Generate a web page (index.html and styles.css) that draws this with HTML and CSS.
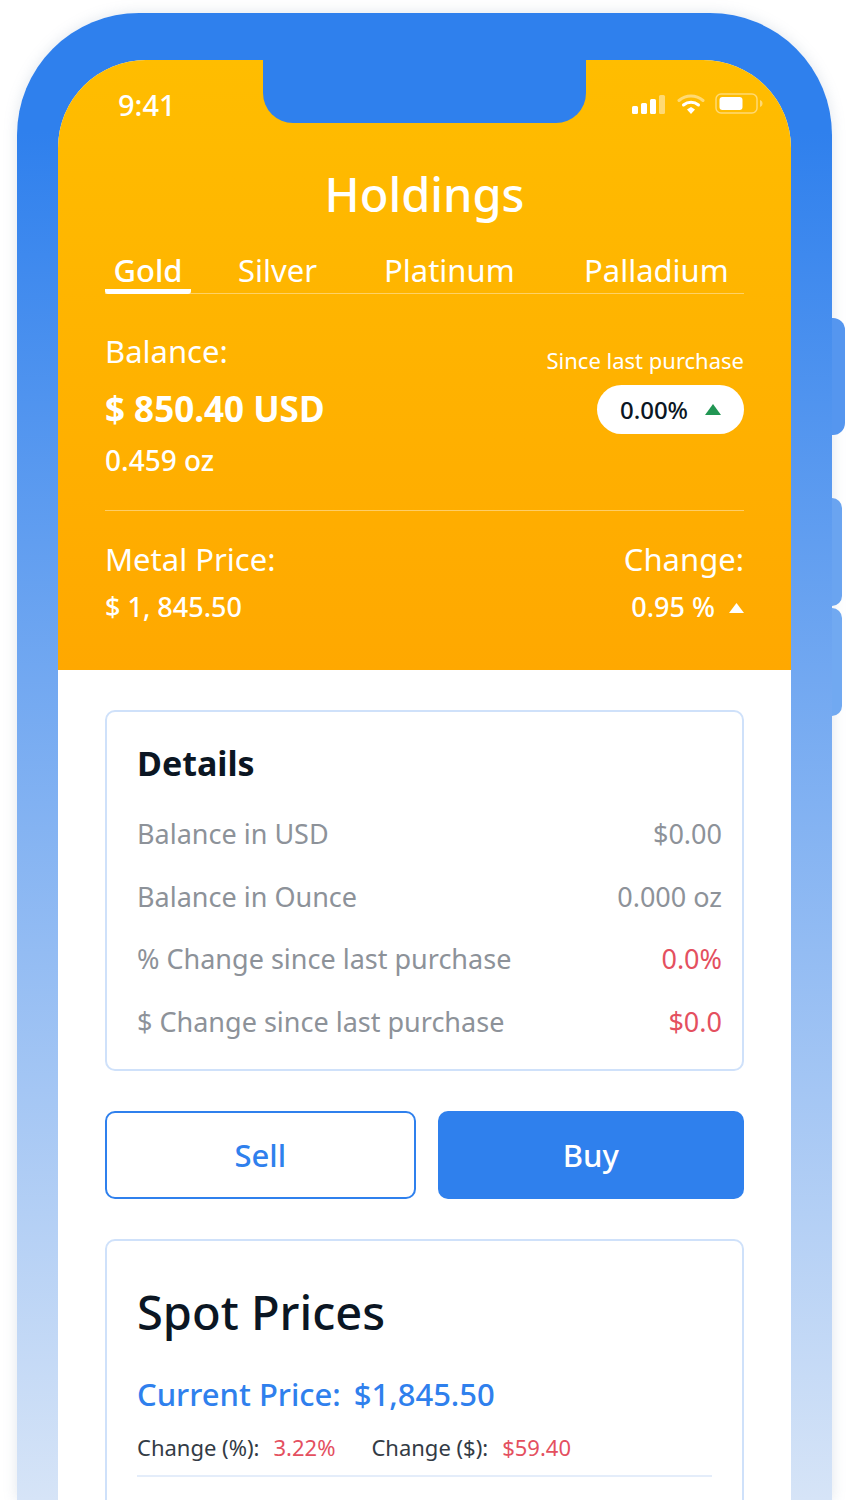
FILE: index.html
```html
<!DOCTYPE html>
<html lang="en">
<head>
<meta charset="utf-8">
<title>Holdings</title>
<link rel="stylesheet" href="styles.css">
</head>
<body>
<div class="device">
  <span class="side-btn side-a"></span>
  <span class="side-btn side-b"></span>
  <span class="side-btn side-c"></span>
  <div class="screen">
    <header class="hero">
      <div class="notch"></div>
      <div class="status">
        <span class="time">9:41</span>
        <span class="status-icons">
          <svg width="35" height="22" viewBox="0 0 35 22"><rect x="0" y="13" width="6" height="8" rx="1.5" fill="#fff"/><rect x="9" y="10" width="6" height="11" rx="1.5" fill="#fff"/><rect x="18" y="6" width="6" height="15" rx="1.5" fill="#fff"/><rect x="27" y="2" width="6" height="19" rx="1.5" fill="#fff" fill-opacity=".45"/></svg>
          <svg width="28" height="22" viewBox="0 0 28 22" fill="none"><path d="M2 7.5C9 1.5 19 1.5 26 7.5" stroke="#fff" stroke-opacity=".45" stroke-width="3" stroke-linecap="round"/><path d="M6.5 12C11 8.2 17 8.2 21.5 12" stroke="#fff" stroke-width="3" stroke-linecap="round"/><path d="M10 16.5 14 14 18 16.5 14 21Z" fill="#fff"/></svg>
          <svg width="48" height="22" viewBox="0 0 48 22" fill="none"><rect x="1" y="1" width="41" height="19" rx="5" stroke="#fff" stroke-opacity=".45" stroke-width="1.5"/><rect x="4.500" y="4" width="23" height="13" rx="3" fill="#fff"/><path d="M45 7C47 8 47.500 9 47.500 10.500 47.500 12 47 13 45 14Z" fill="#fff" fill-opacity=".45"/></svg>
        </span>
      </div>
      <h1 class="title">Holdings</h1>
      <nav class="tabs">
        <a class="tab tab-active">Gold</a>
        <a class="tab">Silver</a>
        <a class="tab">Platinum</a>
        <a class="tab">Palladium</a>
      </nav>
      <section class="balance">
        <div class="balance-left">
          <div class="label">Balance:</div>
          <div class="amount">$ 850.40 USD</div>
          <div class="oz">0.459 oz</div>
        </div>
        <div class="balance-right">
          <div class="since">Since last purchase</div>
          <div class="pill">0.00%<svg class="tri" width="16" height="11" viewBox="0 0 16 11"><path d="M8 0 16 11H0Z" fill="#219653"/></svg></div>
        </div>
      </section>
      <section class="metal">
        <div>
          <div class="label">Metal Price:</div>
          <div class="metal-value">$ 1, 845.50</div>
        </div>
        <div class="metal-right">
          <div class="label">Change:</div>
          <div class="metal-value">0.95 %<svg class="tri" width="15" height="10" viewBox="0 0 15 10"><path d="M7.500 0 15 10H0Z" fill="#fff"/></svg></div>
        </div>
      </section>
    </header>
    <main class="content">
      <section class="card details">
        <h2 class="details-title">Details</h2>
        <div class="row"><span>Balance in USD</span><span>$0.00</span></div>
        <div class="row"><span>Balance in Ounce</span><span>0.000 oz</span></div>
        <div class="row"><span>% Change since last purchase</span><span class="red">0.0%</span></div>
        <div class="row"><span>$ Change since last purchase</span><span class="red">$0.0</span></div>
      </section>
      <div class="actions">
        <button class="btn btn-sell">Sell</button>
        <button class="btn btn-buy">Buy</button>
      </div>
      <section class="card spot">
        <h2 class="spot-title">Spot Prices</h2>
        <div class="current"><span>Current Price:</span><span>$1,845.50</span></div>
        <div class="changes">
          <span>Change (%):</span><span class="red">3.22%</span>
          <span class="second">Change ($):</span><span class="red">$59.40</span>
        </div>
        <div class="rule"></div>
      </section>
    </main>
  </div>
</div>
</body>
</html>
```
FILE: styles.css
```css
* { box-sizing: border-box; }
html, body { margin: 0; height: 1500px; overflow: hidden; background: #fff; }
body { font-family: "Noto Sans", "Open Sans", sans-serif; color: #0b1623; }

.device {
  position: relative;
  width: 815px;
  height: 1487px;
  margin: 13px 0 0 17px;
  padding: 47px 41px 0;
  border-radius: 122px 122px 0 0;
  background: linear-gradient(180deg, #2f80ed 0%, #2f80ed 8%, #d6e4f7 100%);
  box-shadow: 0 0 14px rgba(120, 140, 170, .22);
}
.side-btn { position: absolute; background: #5b9cf0; border-radius: 0 12px 12px 0; }
.side-a { left: 815px; top: 305px; width: 13px; height: 117px; background: #5596ef; }
.side-b { left: 815px; top: 485px; width: 10px; height: 108px; background: #6aa4f0; }
.side-c { left: 815px; top: 595px; width: 10px; height: 108px; background: #71a9f1; }

.screen { width: 733px; height: 1440px; background: #fff; border-radius: 88px 88px 0 0; overflow: hidden; }

.hero {
  position: relative;
  height: 610px;
  padding: 0 47px;
  color: #fff;
  background: linear-gradient(180deg, #ffbd00 0%, #ffa800 100%);
}
.notch { position: absolute; left: 205px; top: 0; width: 323px; height: 63px; background: #2f80ed; border-radius: 0 0 30px 30px; }

.status { display: flex; justify-content: space-between; align-items: center; height: 32px; position: relative; top: 28px; padding-left: 13px; margin-right: -19px; }
.time { font-size: 29px; font-weight: 500; }
.status-icons { display: flex; align-items: center; gap: 10px; }

.title { margin: 0; padding-top: 72px; text-align: center; font-size: 47px; line-height: 60px; font-weight: 500; }

.tabs { display: grid; grid-template-columns: 133px 146px 200px 1fr; margin-top: 26px; height: 44px; border-bottom: 1.500px solid rgba(255,255,255,.4); }
.tab { display: block; height: 44px; font-size: 31px; line-height: 41px; }
.tab-active { width: 86px; text-align: center; font-weight: 500; border-bottom: 5px solid #fff; border-radius: 3px; }

.balance { display: flex; justify-content: space-between; height: 217px; padding-top: 36px; border-bottom: 1.500px solid rgba(255,255,255,.4); }
.label { font-size: 31px; line-height: 42px; }
.amount { font-size: 35px; line-height: 46px; font-weight: 700; margin-top: 14px; }
.oz { font-size: 28px; line-height: 37px; margin-top: 10px; font-weight: 500; }
.balance-right { display: flex; flex-direction: column; align-items: flex-end; padding-top: 15px; }
.since { font-size: 22px; line-height: 30px; }
.pill { display: flex; align-items: center; justify-content: center; gap: 17px; width: 147px; height: 49px; margin-top: 10px; background: #fff; color: #0b1623; border-radius: 25px; font-size: 24px; font-weight: 500; }

.metal { display: flex; justify-content: space-between; padding-top: 27px; }
.metal-right { text-align: right; }
.metal-value { font-size: 27px; line-height: 37px; margin-top: 8px; font-weight: 500; }
.metal-value .tri { margin-left: 14px; position: relative; top: -4px; }

.content { padding: 40px 47px 0; }
.card { border: 2px solid #cfe1fa; border-radius: 10px; background: #fff; }
.details { height: 361px; padding: 28px 20px 0 30px; }
.details-title { margin: 0 0 26px; font-size: 34px; line-height: 46px; font-weight: 700; }
.row { display: flex; justify-content: space-between; height: 62.500px; font-size: 27px; line-height: 44px; color: #8d9299; }
.red { color: #e4505f; }

.actions { display: flex; gap: 22px; margin-top: 40px; }
.btn { flex: 1; height: 88px; padding: 0; font-family: inherit; font-size: 31px; font-weight: 500; border-radius: 10px; }
.btn-sell { background: #fff; color: #2f80ed; border: 2px solid #2f80ed; }
.btn-buy { background: #2f80ed; color: #fff; border: 0; }

.spot { margin-top: 40px; height: 400px; padding: 41px 30px 0; }
.spot-title { margin: 0; font-size: 47px; line-height: 60px; font-weight: 500; }
.current { display: flex; gap: 13px; margin-top: 31px; font-size: 31px; line-height: 42px; font-weight: 500; color: #2f80ed; }
.changes { display: flex; margin-top: 17px; font-size: 22px; line-height: 30px; color: #333b45; }
.changes .red { margin-left: 14px; }
.changes .second { margin-left: 36px; }
.rule { height: 2px; margin-top: 13px; background: #e4edfa; }
```
